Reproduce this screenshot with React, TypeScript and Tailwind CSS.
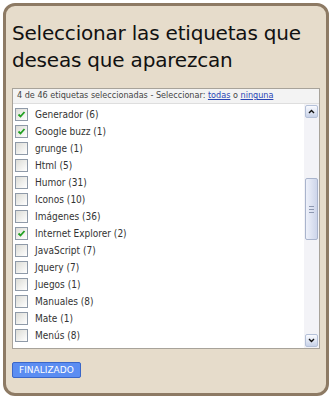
const tags: [string, number, boolean][] = [
  ['Generador', 6, true],
  ['Google buzz', 1, true],
  ['grunge', 1, false],
  ['Html', 5, false],
  ['Humor', 31, false],
  ['Iconos', 10, false],
  ['Imágenes', 36, false],
  ['Internet Explorer', 2, true],
  ['JavaScript', 7, false],
  ['Jquery', 7, false],
  ['Juegos', 1, false],
  ['Manuales', 8, false],
  ['Mate', 1, false],
  ['Menús', 8, false],
];

function Box({ checked }: { checked: boolean }) {
  return (
    <span className="flex h-[13px] w-[13px] shrink-0 items-center justify-center border border-[#8f9aa8] bg-gradient-to-br from-[#dcdcd6] to-white">
      {checked ? (
        <svg width="9" height="9" viewBox="0 0 9 9">
          <path d="M1.5 4.5 L3.5 6.5 L7.5 2" fill="none" stroke="#21a121" strokeWidth="1.8" />
        </svg>
      ) : null}
    </span>
  );
}

function ScrollButton({ up }: { up: boolean }) {
  return (
    <div className="flex h-[13px] w-[13px] items-center justify-center rounded-[2px] border border-[#b5c1d8] bg-gradient-to-b from-[#fafbff] to-[#c8d2e8]">
      <svg width="7" height="5" viewBox="0 0 7 5">
        <path d={up ? 'M1 4 L3.5 1.5 L6 4' : 'M1 1 L3.5 3.5 L6 1'} fill="none" stroke="#111" strokeWidth="1.4" />
      </svg>
    </div>
  );
}

export default function App() {
  return (
    <div className="h-[400px] w-[332px] bg-white p-[3px] font-['DejaVu_Sans',sans-serif]">
      <div className="flex h-[393px] flex-col rounded-[12px] border-[3px] border-[#8d7a64] bg-[#e6dccb] px-[6px]">
        <h1 className="mt-[14px] text-[20px] leading-[27px] tracking-[-0.2px] text-[#111]">
          Seleccionar las etiquetas que deseas que aparezcan
        </h1>

        <div className="mt-[14px] flex h-[261px] flex-col border border-[#a8a39a] bg-white">
          <div className="flex h-[15px] items-center border-b border-[#dedede] bg-[#f3f3f3] px-[4px] text-[9px] text-[#444] font-['DejaVu_Sans_Condensed','DejaVu_Sans',sans-serif]">
            4 de 46 etiquetas seleccionadas - Seleccionar:&nbsp;
            <span className="text-[#2a45b5] underline">todas</span>
            &nbsp;o&nbsp;
            <span className="text-[#2a45b5] underline">ninguna</span>
          </div>
          <div className="flex flex-1">
            <ul className="flex-1 pt-[2px] pl-[2px]">
              {tags.map(([name, count, checked]) => (
                <li key={name} className="flex h-[17px] items-center gap-[7px] text-[10px] text-[#333] font-['DejaVu_Sans_Condensed','DejaVu_Sans',sans-serif]">
                  <Box checked={checked} />
                  <span>
                    {name} ({count})
                  </span>
                </li>
              ))}
            </ul>
            <div className="flex w-[15px] flex-col items-center bg-[#f3f3f7] pb-[1px] pt-[1px]">
              <ScrollButton up />
              <div className="mt-[60px] flex h-[62px] w-[13px] items-center justify-center rounded-[2px] border border-[#a9b4cc] bg-gradient-to-r from-[#eef1fa] to-[#cdd5ea]">
                <div className="flex flex-col gap-[2px]">
                  <span className="h-px w-[5px] bg-[#8c97b0]" />
                  <span className="h-px w-[5px] bg-[#8c97b0]" />
                  <span className="h-px w-[5px] bg-[#8c97b0]" />
                </div>
              </div>
              <div className="flex-1" />
              <ScrollButton up={false} />
            </div>
          </div>
        </div>

        <div className="mt-[13px] flex">
          <button className="h-[16px] rounded-[2px] border border-[#3a66c8] bg-[#5b8df2] px-[6px] text-[9px] leading-[14px] text-white">
            FINALIZADO
          </button>
        </div>
      </div>
    </div>
  );
}
